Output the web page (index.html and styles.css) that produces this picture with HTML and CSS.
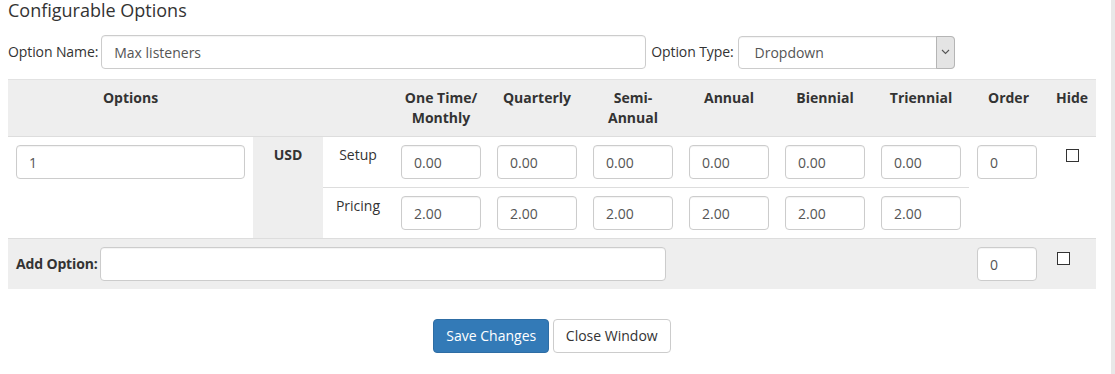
FILE: index.html
```html
<!DOCTYPE html>
<html lang="en">
<head>
    <meta charset="UTF-8">
    <title>Configurable Options</title>
    <link rel="stylesheet" href="styles.css">
</head>
<body>
<div class="page">
    <div class="content">
        <h3 class="title">Configurable Options</h3>
        <div class="option-head">
            <label class="lbl-name">Option Name:</label>
            <input class="form-control name-input" type="text" value="Max listeners">
            <label class="lbl-type">Option Type:</label>
            <div class="select-wrap">
                <select class="form-control type-select">
                    <option>Dropdown</option>
                </select>
                <span class="select-arrow">
                    <svg width="9" height="6" viewBox="0 0 9 6"><path d="M1 1l3.5 3.5L8 1" fill="none" stroke="#555" stroke-width="1.1"/></svg>
                </span>
            </div>
        </div>

        <table class="options-table">
            <colgroup>
                <col style="width:245px">
                <col style="width:70px">
                <col style="width:70px">
                <col style="width:96px">
                <col style="width:96px">
                <col style="width:96px">
                <col style="width:96px">
                <col style="width:96px">
                <col style="width:96px">
                <col style="width:79px">
                <col style="width:48px">
            </colgroup>
            <thead>
                <tr>
                    <th>Options</th>
                    <th></th>
                    <th></th>
                    <th>One Time/<br>Monthly</th>
                    <th>Quarterly</th>
                    <th>Semi-<br>Annual</th>
                    <th>Annual</th>
                    <th>Biennial</th>
                    <th>Triennial</th>
                    <th>Order</th>
                    <th>Hide</th>
                </tr>
            </thead>
            <tbody>
                <tr>
                    <td rowspan="2"><input class="form-control" type="text" value="1"></td>
                    <td rowspan="2" class="currency">USD</td>
                    <td class="price-label">Setup</td>
                    <td><input class="form-control price" type="text" value="0.00"></td>
                    <td><input class="form-control price" type="text" value="0.00"></td>
                    <td><input class="form-control price" type="text" value="0.00"></td>
                    <td><input class="form-control price" type="text" value="0.00"></td>
                    <td><input class="form-control price" type="text" value="0.00"></td>
                    <td><input class="form-control price" type="text" value="0.00"></td>
                    <td rowspan="2"><input class="form-control order" type="text" value="0"></td>
                    <td rowspan="2" class="hide-cell"><input class="check" type="checkbox"></td>
                </tr>
                <tr class="sub-row">
                    <td class="price-label">Pricing</td>
                    <td><input class="form-control price" type="text" value="2.00"></td>
                    <td><input class="form-control price" type="text" value="2.00"></td>
                    <td><input class="form-control price" type="text" value="2.00"></td>
                    <td><input class="form-control price" type="text" value="2.00"></td>
                    <td><input class="form-control price" type="text" value="2.00"></td>
                    <td><input class="form-control price" type="text" value="2.00"></td>
                </tr>
                <tr class="add-row">
                    <td colspan="9">
                        <div class="add-option">
                            <strong>Add Option:</strong>
                            <input class="form-control add-input" type="text">
                        </div>
                    </td>
                    <td><input class="form-control order" type="text" value="0"></td>
                    <td class="hide-add"><input class="check" type="checkbox"></td>
                </tr>
            </tbody>
        </table>

        <div class="actions">
            <button class="btn btn-primary">Save Changes</button>
            <button class="btn btn-default">Close Window</button>
        </div>
    </div>
    <div class="scroll-track"></div>
</div>
</body>
</html>
```

FILE: styles.css
```css
body {
    margin: 0;
    font-family: "Open Sans", "Liberation Sans", sans-serif;
    font-size: 14px;
    line-height: 20px;
    color: #333;
    background: #fff;
}

.page {
    display: flex;
    min-height: 100vh;
}

.content {
    width: 1088px;
    padding: 0 15px 0 8px;
}

.scroll-track {
    width: 4px;
    background: #e8e8e8;
}

.title {
    margin: 0 0 15px;
    font-size: 18px;
    font-weight: normal;
    line-height: 20px;
}

.form-control {
    box-sizing: border-box;
    height: 34px;
    padding: 6px 12px;
    font-family: inherit;
    font-size: 14px;
    line-height: 20px;
    color: #555;
    background: #fff;
    border: 1px solid #ccc;
    border-radius: 4px;
    box-shadow: inset 0 1px 1px rgba(0, 0, 0, .05);
}

.option-head {
    display: flex;
    align-items: center;
    height: 34px;
    margin-bottom: 10px;
}

.lbl-name {
    margin-right: 3px;
    letter-spacing: -0.1px;
}

.name-input {
    width: 545px;
}

.lbl-type {
    margin: 0 4px 0 5px;
    letter-spacing: -0.1px;
}

.select-wrap {
    position: relative;
    width: 217px;
    height: 33px;
}

.type-select {
    -webkit-appearance: none;
    appearance: none;
    width: 100%;
    height: 33px;
    padding: 6px 16px;
}

.select-arrow {
    position: absolute;
    top: 0;
    right: 0;
    width: 17px;
    height: 31px;
    display: flex;
    align-items: center;
    justify-content: center;
    background: #e4e4e4;
    border: 1px solid #b5b5b5;
    border-radius: 0 4px 4px 0;
}

.options-table {
    width: 1088px;
    table-layout: fixed;
    border-collapse: collapse;
    border-top: 1px solid #e2e2e2;
}

.options-table th {
    padding: 8px;
    background: #eee;
    font-weight: bold;
    text-align: center;
    vertical-align: top;
    border-bottom: 1px solid #ddd;
}

.options-table td {
    padding: 8px;
    vertical-align: top;
}

.options-table td .form-control {
    width: 100%;
}

.options-table td .price {
    width: 80px;
}

.options-table td .order {
    width: 60px;
}

.currency {
    background: #eee;
    font-weight: bold;
    text-align: center;
}

.price-label {
    text-align: center;
}

.sub-row td {
    border-top: 1px solid #ddd;
}

.hide-cell {
    text-align: center;
}

.check {
    -webkit-appearance: none;
    appearance: none;
    width: 13px;
    height: 13px;
    margin: 4px 0 0;
    background: #fff;
    border: 1px solid #333;
    border-radius: 0;
}

.hide-add .check {
    margin: 5px 0 0 1px;
}

.add-row td {
    background: #eee;
    border-top: 1px solid #ddd;
}

.add-option {
    display: flex;
    align-items: center;
}

.add-option strong {
    margin-right: 2px;
    letter-spacing: -0.15px;
}

.options-table td .add-input {
    width: 566px;
}

.actions {
    margin-top: 30px;
    text-align: center;
}

.btn {
    height: 34px;
    padding: 6px 12px;
    font-family: inherit;
    font-size: 14px;
    line-height: 20px;
    border: 1px solid transparent;
    border-radius: 4px;
}

.btn-primary {
    color: #fff;
    background: #337ab7;
    border-color: #2e6da4;
}

.btn-default {
    color: #333;
    background: #fff;
    border-color: #ccc;
}
```
